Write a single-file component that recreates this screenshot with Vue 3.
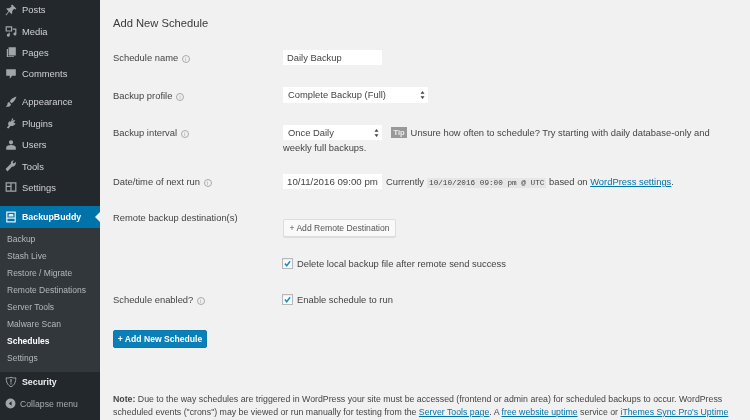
<script setup>
const topItems = [
  { name: 'Posts', icon: 'M12 1l7 7-2 1-2-1-3 4 0 3-1 2-4-4-5 6-1-1 5-6-4-4 2-1 3 0 4-3-1-2z' },
  { name: 'Media', icon: 'M1 2h11v9H1zM3 4v5h7V4zM13 6h6v9a2.5 2.5 0 1 1-2-2.4V8h-4zM8 13v4a2.5 2.5 0 1 1-2-2.4V13z' },
  { name: 'Pages', icon: 'M6 2h12v14H6zM3 5h2v12h10v1.5H3z' },
  { name: 'Comments', icon: 'M2 2h16v11h-6l-4 5v-5H2z' },
  { name: 'Appearance', gap: true, icon: 'M19 1c-4 1-9 4-11 8l3 3c4-2 7-7 8-11zM7 10c-2 0-3 2-3 4 0 1-2 3-3 3 3 2 8 1 9-3z' },
  { name: 'Plugins', icon: 'M12 2l2 1-2 4 3-2 2 1-3 4 3 0 0 2-4 3-4 0-3 4-3-1 3-4-1-3 2-4 3 1z' },
  { name: 'Users', icon: 'M10 2a3.5 3.5 0 1 1 0 7 3.5 3.5 0 0 1 0-7zM2 18v-4c0-2 3-4 8-4s8 2 8 4v4z' },
  { name: 'Tools', icon: 'M18 3l-3 3-2-1 0-2 2-2c-3-1-6 2-5 5L1 15l3 4 8-8c3 1 7-3 6-8z' },
  { name: 'Settings', icon: 'M1 2h18v16H1zM3 4v4h6V4zM11 4v12h6V4zM3 10v6h6v-6z' }
]

const subItems = ['Backup', 'Stash Live', 'Restore / Migrate', 'Remote Destinations', 'Server Tools', 'Malware Scan', 'Schedules', 'Settings']
</script>

<template>
  <div class="admin">
    <aside class="sidebar">
      <ul class="menu">
        <li v-for="item in topItems" :key="item.name" class="menu-item" :class="{ gap: item.gap }">
          <svg class="menu-icon" viewBox="0 0 20 20"><path :d="item.icon" fill-rule="evenodd" /></svg>
          <span>{{ item.name }}</span>
        </li>
      </ul>

      <div class="menu-item current">
        <svg class="menu-icon" viewBox="0 0 20 20">
          <path fill-rule="evenodd" d="M2 1h16v18H2zM4 3v8h12V3zM4 13v4h12v-4zM7 5h6v1h1v3H6V6h1z" />
        </svg>
        <span>BackupBuddy</span>
      </div>
      <ul class="submenu">
        <li v-for="name in subItems" :key="name" :class="{ active: name === 'Schedules' }">{{ name }}</li>
      </ul>

      <div class="menu-item security">
        <svg class="menu-icon" viewBox="0 0 20 20">
          <path fill="none" stroke="currentColor" stroke-width="1.6" d="M2 3c3 1 6 0 8-1 2 1 5 2 8 1 0 7-2 12-8 15C4 15 2 10 2 3z" />
          <path d="M9 5h2v6H9zM9 12h2v2H9z" />
        </svg>
        <span>Security</span>
      </div>
      <div class="menu-item collapse">
        <svg class="menu-icon" viewBox="0 0 20 20">
          <path fill-rule="evenodd" d="M10 1a9 9 0 1 1 0 18 9 9 0 0 1 0-18zM12 6l-5 4 5 4z" />
        </svg>
        <span>Collapse menu</span>
      </div>
    </aside>

    <main class="content">
      <h3 class="title">Add New Schedule</h3>

      <div class="row row-name">
        <div class="label">Schedule name <i class="help">i</i></div>
        <div><input class="field short" value="Daily Backup" readonly /></div>
      </div>

      <div class="row row-profile">
        <div class="label">Backup profile <i class="help">i</i></div>
        <div>
          <span class="select wide">
            Complete Backup (Full)
            <svg class="arrows" viewBox="0 0 6 10"><path d="M3 0l2.5 3.5h-5zM3 10L.5 6.500h5z" /></svg>
          </span>
        </div>
      </div>

      <div class="row row-interval">
        <div class="label">Backup interval <i class="help">i</i></div>
        <div class="interval">
          <span class="select short">
            Once Daily
            <svg class="arrows" viewBox="0 0 6 10"><path d="M3 0l2.5 3.5h-5zM3 10L.5 6.500h5z" /></svg>
          </span>
          <span class="tip">Tip</span>
          Unsure how often to schedule? Try starting with daily database-only and weekly full backups.
        </div>
      </div>

      <div class="row row-date">
        <div class="label">Date/time of next run <i class="help">i</i></div>
        <div class="date">
          <input class="field short" value="10/11/2016 09:00 pm" readonly />
          <span class="current-label">Currently</span>
          <code>10/10/2016 09:00 pm @ UTC</code>
          based on <a href="#">WordPress settings</a>.
        </div>
      </div>

      <div class="row row-remote">
        <div class="label">Remote backup destination(s)</div>
        <div class="remote">
          <button class="btn" type="button">+ Add Remote Destination</button>
          <label class="check">
            <span class="box"><svg viewBox="0 0 12 12"><path d="M2.500 6l2.500 3 4.500-6" /></svg></span>
            Delete local backup file after remote send success
          </label>
        </div>
      </div>

      <div class="row row-enabled">
        <div class="label">Schedule enabled? <i class="help">i</i></div>
        <label class="check">
          <span class="box"><svg viewBox="0 0 12 12"><path d="M2.500 6l2.500 3 4.500-6" /></svg></span>
          Enable schedule to run
        </label>
      </div>

      <button class="btn primary" type="button">+ Add New Schedule</button>

      <p class="note">
        <strong>Note:</strong> Due to the way schedules are triggered in WordPress your site must be accessed (frontend or admin area) for scheduled backups to occur. WordPress<br />
        scheduled events ("crons") may be viewed or run manually for testing from the <a href="#">Server Tools page</a>. A <a href="#">free website uptime</a> service or <a href="#">iThemes Sync Pro's Uptime</a><br />
        <a href="#">Monitoring</a> can be used to automatically access your site on a schedule to help trigger scheduled backups. (Note: this is one of the options)
      </p>
    </main>
  </div>
</template>

<style>
html, body {
  margin: 0;
  overflow: hidden;
}
</style>

<style scoped>
.admin {
  display: flex;
  width: 750px;
  height: 420px;
  overflow: hidden;
  background: #f1f1f1;
  color: #444;
  font-family: "Liberation Sans", Arial, sans-serif;
  font-size: 9.4px;
  filter: blur(0.7px);
}
.sidebar {
  width: 100px;
  flex-shrink: 0;
  background: #23282d;
  color: #eee;
  overflow: hidden;
}
.menu, .submenu {
  list-style: none;
  margin: 0;
  padding: 0;
}
.menu {
  margin-top: -1px;
}
.menu-item {
  display: flex;
  align-items: center;
  height: 21.4px;
  padding-left: 5px;
  gap: 5px;
  color: #d0d2d4;
}
.menu-item.gap {
  margin-top: 6.6px;
}
.menu-icon {
  width: 12px;
  height: 12px;
  flex-shrink: 0;
  fill: #a0a5aa;
  color: #a0a5aa;
}
.current {
  margin-top: 8px;
  position: relative;
  background: #0073aa;
  color: #fff;
  font-weight: bold;
  font-size: 8.8px;
}
.current .menu-icon {
  fill: #e6f2f7;
}
.current::after {
  content: "";
  position: absolute;
  right: 0;
  top: 6px;
  border: 5px solid transparent;
  border-right-color: #f1f1f1;
  border-left-width: 0;
}
.submenu {
  background: #32373c;
  padding: 3px 0 5px;
  color: #b4b9be;
  font-size: 8.5px;
}
.submenu li {
  height: 17px;
  line-height: 17px;
  padding-left: 7px;
}
.submenu .active {
  color: #fff;
  font-weight: bold;
}
.security {
  color: #eee;
  font-weight: bold;
  font-size: 8.8px;
}
.collapse {
  color: #a8adb2;
  font-size: 8.7px;
  gap: 4px;
  padding-left: 5px;
}
.collapse .menu-icon {
  width: 11px;
  height: 11px;
}
.content {
  flex: 1;
  padding: 16px 20px 0 13px;
}
.title {
  margin: 0;
  height: 14px;
  line-height: 14px;
  font-size: 11.2px;
  font-weight: normal;
  color: #3a3a3a;
}
.row {
  display: grid;
  grid-template-columns: 170px 1fr;
}
.label {
  line-height: 15px;
  color: #444;
}
.help {
  display: inline-block;
  width: 6px;
  height: 6px;
  margin-left: 1px;
  border: 1px solid #aaa;
  border-radius: 50%;
  font-size: 5px;
  line-height: 6px;
  font-style: normal;
  text-align: center;
  color: #999;
  vertical-align: 0;
}
.row-name { margin-top: 20px; }
.row-profile { margin-top: 22px; }
.row-interval { margin-top: 22px; }
.row-date { margin-top: 19px; }
.row-remote { margin-top: 19px; }
.row-enabled { margin-top: 21px; }
.row-profile .label { padding-top: 1px; }
.field, .select {
  box-sizing: border-box;
  display: inline-block;
  height: 15px;
  line-height: 15px;
  padding: 0 4px;
  border: 0;
  background: #fff;
  color: #444;
  font: inherit;
  outline: none;
  vertical-align: top;
}
.date .field {
  font-size: 9.7px;
}
.short {
  width: 99px;
}
.wide {
  width: 145px;
  height: 16px;
  line-height: 16px;
}
.select {
  position: relative;
  padding-left: 5px;
}
.arrows {
  position: absolute;
  right: 3px;
  top: 4px;
  width: 5px;
  height: 8px;
  fill: #444;
}
.interval {
  line-height: 15px;
  width: 440px;
}
.tip {
  display: inline-block;
  width: 16px;
  height: 11px;
  margin: 0 1px 0 9px;
  line-height: 11px;
  background: #999;
  color: #eee;
  font-size: 7.5px;
  font-weight: bold;
  text-align: center;
  vertical-align: 1px;
}
.date {
  line-height: 15px;
  white-space: nowrap;
}
.current-label {
  margin-left: 4px;
  margin-right: 3px;
}
code {
  padding: 1px 2px;
  background: #e6e6e6;
  font-family: "Liberation Mono", monospace;
  font-size: 7.7px;
  color: #444;
}
a {
  color: #0073aa;
}
.remote {
  display: flex;
  flex-direction: column;
  align-items: flex-start;
}
.btn {
  box-sizing: border-box;
  height: 18px;
  padding: 0 8px;
  border: 1px solid #ddd;
  border-radius: 2px;
  background: #f9f9f9;
  box-shadow: 0 1px 0 #ddd;
  color: #555;
  font: inherit;
  font-size: 8.6px;
}
.remote .btn {
  margin-top: 9px;
  width: 113px;
  padding: 0;
}
.check {
  display: flex;
  align-items: center;
  gap: 4px;
  height: 15px;
  line-height: 15px;
}
.remote .check {
  margin-top: 19px;
}
.box {
  width: 11px;
  height: 11px;
  box-sizing: border-box;
  margin-left: -1px;
  border: 1px solid #b4b9be;
  background: #fff;
  box-shadow: inset 0 1px 2px rgba(0, 0, 0, 0.1);
}
.box svg {
  display: block;
  width: 100%;
  height: 100%;
  fill: none;
  stroke: #1e8cbe;
  stroke-width: 2;
}
.primary {
  display: block;
  width: 94px;
  margin-top: 23px;
  padding: 0;
  border-color: #0a78ac;
  background: #0a80b8;
  box-shadow: none;
  color: #fff;
  font-weight: bold;
}
.note {
  margin: 45px 0 0;
  width: 625px;
  font-size: 8.77px;
  line-height: 13px;
  white-space: nowrap;
  color: #444;
}
</style>
